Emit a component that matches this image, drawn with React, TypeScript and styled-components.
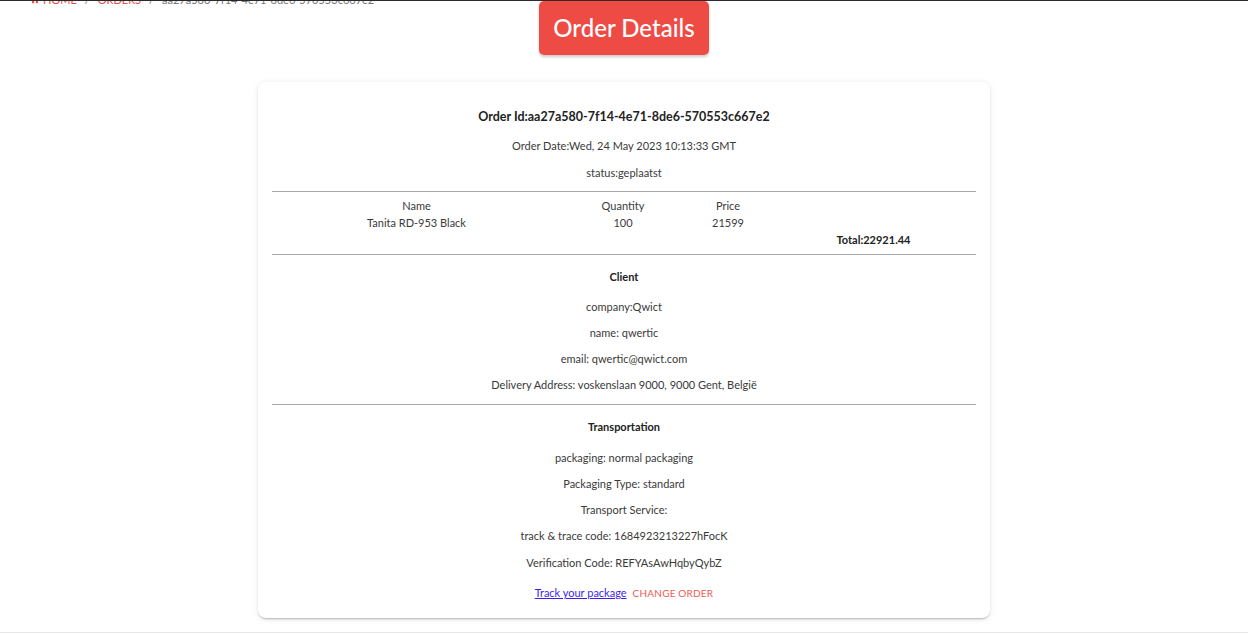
import React from "react";
import styled, { createGlobalStyle } from "styled-components";

const Global = createGlobalStyle`
  html, body { margin: 0; padding: 0; background: #fff; }
  body { font-family: "Lato", "Noto Sans", sans-serif; color: #3a3a3a; }
  * { box-sizing: border-box; }
`;

const Page = styled.div`
  border-top: 1px solid #2b2b2b;
  overflow: hidden;
  min-height: 634px;
  display: flex;
  flex-direction: column;
`;

const Header = styled.div`
  display: grid;
  grid-template-columns: 1fr auto 1fr;
  align-items: start;
`;

const Breadcrumb = styled.nav`
  display: flex;
  align-items: center;
  gap: 8px;
  margin-top: -9px;
  padding-left: 30px;
  font-size: 11px;
  line-height: 16px;
  color: #777;
`;

const Crumb = styled.span<{ $active?: boolean }>`
  color: ${(p) => (p.$active ? "#777" : "#ef4b45")};
  text-transform: ${(p) => (p.$active ? "none" : "uppercase")};
  display: inline-flex;
  align-items: center;
  gap: 3px;
`;

const TitleBox = styled.div`
  background: #ef4b45;
  color: #fff;
  font-size: 24px;
  font-weight: 500;
  padding: 0 14px;
  height: 54px;
  line-height: 54px;
  border-radius: 5px;
  box-shadow: 0 2px 3px rgba(0, 0, 0, 0.2);
`;

const Card = styled.section`
  width: 732px;
  margin: 27px auto 0;
  background: #fff;
  border-radius: 8px;
  box-shadow: 0 2px 2px -1px rgba(0, 0, 0, 0.25), 0 1px 6px rgba(0, 0, 0, 0.1);
  padding: 22px 14px 12px;
  text-align: center;
  font-size: 11px;
`;

const OrderId = styled.div`
  font-size: 12.5px;
  font-weight: 700;
  line-height: 26px;
  color: #222;
  margin-bottom: 3px;
`;

const Line = styled.div<{ $gapTop?: number }>`
  line-height: 26px;
  margin-top: ${(p) => p.$gapTop ?? 0}px;
`;

const Heading = styled.div<{ $gap: number; $after: number }>`
  font-weight: 700;
  line-height: 26px;
  color: #222;
  margin-top: ${(p) => p.$gap}px;
  margin-bottom: ${(p) => p.$after}px;
`;

const Divider = styled.hr<{ $top: number }>`
  border: 0;
  border-top: 1px solid #a8a8a8;
  margin: ${(p) => p.$top}px 0 0;
`;

const Table = styled.div`
  display: grid;
  grid-template-columns: 289px 124px 86px 1fr;
  line-height: 17px;
  padding: 5px 0 6px;
`;

const Cell = styled.div<{ $bold?: boolean }>`
  font-weight: ${(p) => (p.$bold ? 700 : 400)};
  color: ${(p) => (p.$bold ? "#222" : "inherit")};
`;

const Actions = styled.div`
  display: flex;
  justify-content: center;
  align-items: center;
  gap: 6px;
  line-height: 26px;
  margin-top: 4px;
`;

const TrackLink = styled.a`
  color: #3b1ff2;
  text-decoration: underline;
  font-size: 11px;
`;

const TextButton = styled.button`
  border: 0;
  background: none;
  padding: 0;
  font-family: inherit;
  font-size: 10px;
  color: #ef5a55;
  text-transform: uppercase;
  letter-spacing: 0.2px;
`;

const Footer = styled.div`
  margin-top: auto;
  border-top: 1px solid #e6e6e6;
  height: 2px;
`;

const HomeIcon = () => (
  <svg width="10" height="10" viewBox="0 0 24 24" fill="#ef4b45">
    <path d="M10 20v-6h4v6h5v-8h3L12 3 2 12h3v8z" />
  </svg>
);

export default function App() {
  return (
    <>
      <Global />
      <Page>
        <Header>
          <Breadcrumb>
            <Crumb>
              <HomeIcon />
              Home
            </Crumb>
            <span>/</span>
            <Crumb>Orders</Crumb>
            <span>/</span>
            <Crumb $active>aa27a580-7f14-4e71-8de6-570553c667e2</Crumb>
          </Breadcrumb>
          <TitleBox>Order Details</TitleBox>
          <div />
        </Header>
        <Card>
          <OrderId>Order Id:aa27a580-7f14-4e71-8de6-570553c667e2</OrderId>
          <Line>Order Date:Wed, 24 May 2023 10:13:33 GMT</Line>
          <Line $gapTop={1}>status:geplaatst</Line>
          <Divider $top={5} />
          <Table>
            <Cell>Name</Cell>
            <Cell>Quantity</Cell>
            <Cell>Price</Cell>
            <Cell />
            <Cell>Tanita RD-953 Black</Cell>
            <Cell>100</Cell>
            <Cell>21599</Cell>
            <Cell />
            <Cell />
            <Cell />
            <Cell />
            <Cell $bold>Total:22921.44</Cell>
          </Table>
          <Divider $top={0} />
          <Heading $gap={9} $after={4}>Client</Heading>
          <Line>company:Qwict</Line>
          <Line>name: qwertic</Line>
          <Line>email: qwertic@qwict.com</Line>
          <Line>Delivery Address: voskenslaan 9000, 9000 Gent, België</Line>
          <Divider $top={6} />
          <Heading $gap={9} $after={5}>Transportation</Heading>
          <Line>packaging: normal packaging</Line>
          <Line>Packaging Type: standard</Line>
          <Line>Transport Service:</Line>
          <Line>track &amp; trace code: 1684923213227hFocK</Line>
          <Line $gapTop={1}>Verification Code: REFYAsAwHqbyQybZ</Line>
          <Actions>
            <TrackLink href="#">Track your package</TrackLink>
            <TextButton>Change order</TextButton>
          </Actions>
        </Card>
        <Footer />
      </Page>
    </>
  );
}
